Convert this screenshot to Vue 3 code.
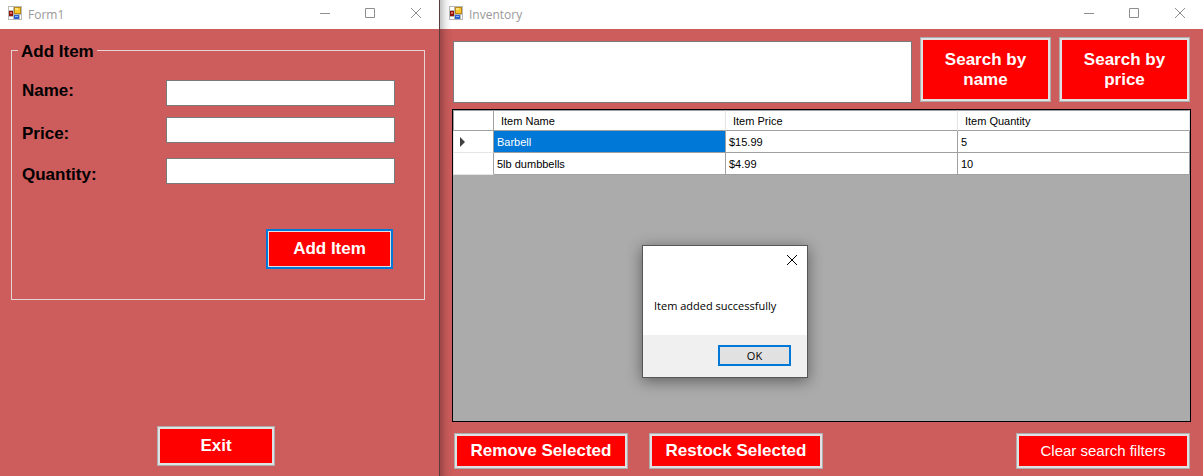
<script setup>
import { ref } from 'vue'

const fields = ref([
  { id: 'name', label: 'Name:', value: '' },
  { id: 'price', label: 'Price:', value: '' },
  { id: 'quantity', label: 'Quantity:', value: '' },
])
const search = ref('')
const columns = ['Item Name', 'Item Price', 'Item Quantity']
const items = [
  { name: 'Barbell', price: '$15.99', quantity: 5 },
  { name: '5lb dumbbells', price: '$4.99', quantity: 10 },
]
const windows = { form: 'Form1', inventory: 'Inventory' }
</script>

<template>
  <div class="desktop">
    <section class="window form-window">
      <header class="titlebar">
        <svg class="app-icon" viewBox="0 0 14 14" aria-hidden="true">
          <rect width="14" height="14" fill="#b9b9b9" />
          <rect x="1" y="1" width="4" height="3" fill="#fff" />
          <rect x="1" y="11" width="4" height="2" fill="#fff" />
          <rect x="12" y="9" width="1" height="4" fill="#fff" />
          <rect x="1" y="5" width="4" height="5" fill="#8f1409" />
          <rect x="2" y="6" width="2" height="2" fill="#e0695a" />
          <rect x="6" y="1" width="7" height="7" fill="#b98a12" />
          <rect x="7" y="2" width="5" height="5" fill="#fcc72c" />
          <rect x="7" y="2" width="3" height="2" fill="#fee27c" />
          <rect x="6" y="9" width="5" height="4" fill="#2c62cc" />
          <rect x="7" y="10" width="3" height="1" fill="#8db6f4" />
        </svg>
        <h1>{{ windows.form }}</h1>
        <div class="controls">
          <button type="button" aria-label="Minimize"><svg viewBox="0 0 10 10"><path d="M1 5.5H11" /></svg></button>
          <button type="button" aria-label="Maximize"><svg viewBox="0 0 10 10"><path d="M.5 .5H9.5V9.5H.5Z" /></svg></button>
          <button type="button" aria-label="Close"><svg viewBox="0 0 10 10"><path d="M0 0L10 10M10 0L0 10" /></svg></button>
        </div>
      </header>
      <form class="form-body" @submit.prevent>
        <fieldset>
          <legend>Add Item</legend>
          <div v-for="f in fields" :key="f.id" class="row" :class="f.id">
            <label :for="f.id">{{ f.label }}</label>
            <input :id="f.id" v-model="f.value" type="text" />
          </div>
          <button type="submit" class="btn add">Add Item</button>
        </fieldset>
        <button type="button" class="btn exit">Exit</button>
      </form>
    </section>

    <section class="window inventory-window">
      <header class="titlebar">
        <svg class="app-icon" viewBox="0 0 14 14" aria-hidden="true">
          <rect width="14" height="14" fill="#b9b9b9" />
          <rect x="1" y="1" width="4" height="3" fill="#fff" />
          <rect x="1" y="11" width="4" height="2" fill="#fff" />
          <rect x="12" y="9" width="1" height="4" fill="#fff" />
          <rect x="1" y="5" width="4" height="5" fill="#8f1409" />
          <rect x="2" y="6" width="2" height="2" fill="#e0695a" />
          <rect x="6" y="1" width="7" height="7" fill="#b98a12" />
          <rect x="7" y="2" width="5" height="5" fill="#fcc72c" />
          <rect x="7" y="2" width="3" height="2" fill="#fee27c" />
          <rect x="6" y="9" width="5" height="4" fill="#2c62cc" />
          <rect x="7" y="10" width="3" height="1" fill="#8db6f4" />
        </svg>
        <h1>{{ windows.inventory }}</h1>
        <div class="controls">
          <button type="button" aria-label="Minimize"><svg viewBox="0 0 10 10"><path d="M1 5.5H11" /></svg></button>
          <button type="button" aria-label="Maximize"><svg viewBox="0 0 10 10"><path d="M.5 .5H9.5V9.5H.5Z" /></svg></button>
          <button type="button" aria-label="Close"><svg viewBox="0 0 10 10"><path d="M0 0L10 10M10 0L0 10" /></svg></button>
        </div>
      </header>
      <div class="inventory-body">
        <div class="search-bar">
          <textarea v-model="search" aria-label="Search"></textarea>
          <button type="button" class="btn search">Search by name</button>
          <button type="button" class="btn search">Search by price</button>
        </div>
        <div class="grid">
          <table>
            <thead>
              <tr>
                <th class="marker"></th>
                <th v-for="c in columns" :key="c" scope="col">{{ c }}</th>
              </tr>
            </thead>
            <tbody>
              <tr v-for="(item, i) in items" :key="item.name">
                <td class="marker">
                  <svg v-if="i === 0" viewBox="0 0 5 10" aria-hidden="true"><path d="M0 0L5 5L0 10Z" /></svg>
                </td>
                <td :class="{ selected: i === 0 }">{{ item.name }}</td>
                <td>{{ item.price }}</td>
                <td>{{ item.quantity }}</td>
              </tr>
            </tbody>
          </table>
          <div class="dialog" role="dialog" aria-labelledby="message">
            <button type="button" class="dialog-close" aria-label="Close">
              <svg viewBox="0 0 10 10"><path d="M0 0L10 10M10 0L0 10" /></svg>
            </button>
            <p id="message">Item added successfully</p>
            <div class="dialog-footer"><button type="button" class="ok">OK</button></div>
          </div>
        </div>
        <div class="actions">
          <button type="button" class="btn">Remove Selected</button>
          <button type="button" class="btn">Restock Selected</button>
          <button type="button" class="btn clear">Clear search filters</button>
        </div>
      </div>
    </section>
  </div>
</template>

<style>
body {
  margin: 0;
}
</style>

<style scoped>
* {
  box-sizing: border-box;
}
.desktop {
  display: grid;
  grid-template-columns: minmax(0, 440fr) minmax(0, 763fr);
  min-height: 100vh;
  font-family: "Liberation Sans", Arial, sans-serif;
  font-size: 17px;
  color: #000;
}
.window {
  display: flex;
  flex-direction: column;
  min-width: 0;
  background: #cd5c5c;
}
.form-window {
  border-right: 1px solid #5a3c3c;
}
.inventory-window {
  position: relative;
}
.inventory-window::before {
  content: "";
  position: absolute;
  inset: 0 auto 0 0;
  width: 12px;
  background: linear-gradient(to right, rgba(0, 0, 0, 0.24), rgba(0, 0, 0, 0.07) 50%, transparent);
  pointer-events: none;
}
.titlebar {
  display: flex;
  align-items: center;
  height: 29px;
  padding-left: 8px;
  background: #fff;
}
.inventory-window .titlebar {
  padding-left: 9px;
}
.app-icon {
  width: 14px;
  height: 14px;
  margin-bottom: 3px;
  shape-rendering: crispEdges;
}
.titlebar h1 {
  margin: 0 auto 0 6px;
  font: 12px/16px "Open Sans", "Noto Sans", sans-serif;
  color: #999;
}
.controls {
  display: flex;
}
.controls button {
  width: 46px;
  height: 29px;
  padding: 0 0 3px;
  border: 0;
  background: none;
}
.controls svg,
.dialog-close svg {
  display: block;
  width: 10px;
  height: 10px;
  margin: 0 auto;
  overflow: visible;
  fill: none;
  stroke: #8e8e8e;
  stroke-width: 1;
}
.form-body {
  display: flex;
  flex: 1;
  flex-direction: column;
  justify-content: space-between;
  padding: 11px 14px 10px 11px;
}
fieldset {
  min-width: 0;
  height: 260px;
  margin: 0;
  padding: 20px 29px 0 10px;
  border: 1px solid #e6d3d3;
}
legend {
  margin-left: -4px;
  padding: 4px 3px 0;
  font-weight: bold;
  line-height: 16px;
}
.row {
  display: flex;
  align-items: flex-start;
  height: 41px;
}
.row.name {
  height: 37px;
}
.row label {
  flex: 0 0 144px;
  padding-top: 6px;
  font-weight: bold;
  line-height: 22px;
}
.row.name label {
  padding-top: 0;
}
.row input {
  flex: 1;
  min-width: 0;
  height: 26px;
}
input,
textarea {
  margin: 0;
  padding: 2px 4px;
  border: 1px solid #7a7a7a;
  border-radius: 0;
  outline: 0;
  background: #fff;
  font: inherit;
  resize: none;
}
.btn {
  padding: 0 16px;
  border: 1px solid #adadad;
  box-shadow: inset 0 0 0 2px #e1e1e1;
  border-radius: 0;
  background: #f00;
  color: #fff;
  font: bold 17px/20px "Liberation Sans", Arial, sans-serif;
}
.add {
  display: block;
  width: 127px;
  height: 40px;
  margin: 30px 2px 0 auto;
  border: 2px solid #0078d7;
  box-shadow: inset 0 0 0 1px #e1e1e1;
}
.exit {
  align-self: center;
  width: 118px;
  height: 40px;
  margin-right: 4px;
}
.inventory-body {
  display: flex;
  flex: 1;
  flex-direction: column;
  padding: 8px 12px 7px;
}
.search-bar {
  display: flex;
  align-items: flex-start;
  gap: 8px;
  margin-bottom: 6px;
  padding: 0 1px;
}
.search-bar textarea {
  flex: 1;
  min-width: 0;
  height: 62px;
  margin-top: 4px;
}
.search {
  width: 131px;
  height: 65px;
}
.grid {
  position: relative;
  flex: 1;
  border: 1px solid #000;
  background: #ababab;
}
table {
  width: 100%;
  border-collapse: separate;
  border-spacing: 0;
  table-layout: fixed;
  font-size: 11px;
  line-height: 14px;
}
th,
td {
  height: 22px;
  padding: 0 3px;
  border: solid #a0a0a0;
  border-width: 0 1px 1px 0;
  background: #fff;
  font-weight: normal;
  text-align: left;
}
th {
  height: 21px;
  padding: 0 7px;
  border-top-width: 1px;
  border-right-color: #e5e5e5;
}
.marker {
  width: 41px;
  padding: 0 6px;
  border-left-width: 1px;
}
th.marker {
  border-right-color: #a0a0a0;
}
td.marker {
  border-left-color: #e5e5e5;
  border-bottom-color: #e5e5e5;
}
.marker svg {
  display: block;
  width: 5px;
  height: 10px;
  fill: #404040;
}
.selected {
  background: #0078d7;
  color: #fff;
}
.dialog {
  position: absolute;
  top: 135px;
  left: 189px;
  display: flex;
  flex-direction: column;
  width: 166px;
  height: 133px;
  border: 1px solid #565656;
  background: #fff;
  box-shadow: 0 3px 14px rgba(0, 0, 0, 0.45);
  font: 11px/16px "Open Sans", "Noto Sans", sans-serif;
}
.dialog-close {
  align-self: flex-end;
  width: 30px;
  height: 28px;
  padding: 0;
  border: 0;
  background: none;
}
.dialog-close svg {
  stroke: #000;
}
.dialog p {
  flex: 1;
  margin: 24px 0 0 11px;
  white-space: nowrap;
}
.dialog-footer {
  display: flex;
  justify-content: flex-end;
  padding: 10px 16px 11px;
  background: #f0f0f0;
}
.ok {
  width: 73px;
  height: 21px;
  padding: 0;
  border: 2px solid #0078d7;
  background: #e1e1e1;
  color: #000;
  font: inherit;
}
.actions {
  display: flex;
  gap: 21px;
  margin-top: 11px;
  padding: 0 1px 0 2px;
}
.actions .btn {
  width: 174px;
  height: 36px;
  padding: 0;
}
.actions .clear {
  margin-left: auto;
  font-size: 15px;
  font-weight: normal;
}
</style>
